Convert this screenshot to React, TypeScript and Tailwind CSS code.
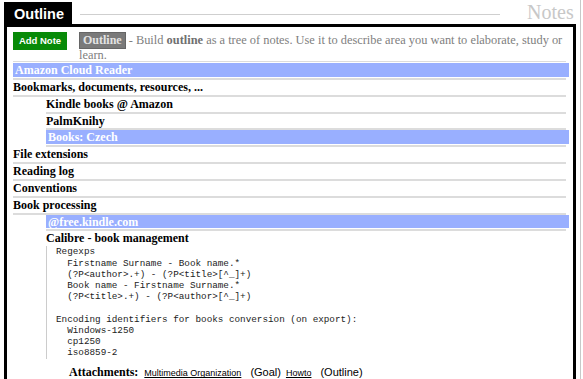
import React from 'react';

type Row = { label: string; level: 0 | 1; active?: boolean };

const ROWS: Row[] = [
  { label: 'Amazon Cloud Reader', level: 0, active: true },
  { label: 'Bookmarks, documents, resources, ...', level: 0 },
  { label: 'Kindle books @ Amazon', level: 1 },
  { label: 'PalmKnihy', level: 1 },
  { label: 'Books: Czech', level: 1, active: true },
  { label: 'File extensions', level: 0 },
  { label: 'Reading log', level: 0 },
  { label: 'Conventions', level: 0 },
  { label: 'Book processing', level: 0 },
  { label: '@free.kindle.com', level: 1, active: true },
];

const NOTE_TEXT = `Regexps
  Firstname Surname - Book name.*
  (?P<author>.+) - (?P<title>[^_]+)
  Book name - Firstname Surname.*
  (?P<title>.+) - (?P<author>[^_]+)

Encoding identifiers for books conversion (on export):
  Windows-1250
  cp1250
  iso8859-2`;

const serif = { fontFamily: '"Liberation Serif", serif' };
const sans = { fontFamily: '"Liberation Sans", Arial, sans-serif' };

function OutlineRow({ row }: { row: Row }) {
  return (
    <div className={`border-b-2 border-[#dcdcdc] mr-[3px] ${row.level === 1 ? 'ml-[33px]' : ''}`}>
      {row.active ? (
        <div className="-mr-[3px] mb-[1px] h-[13.85px] bg-[#99afff] text-white font-bold text-[12px] leading-[14px] pl-[2px] overflow-hidden">
          {row.label}
        </div>
      ) : (
        <div className="h-[14.85px] text-black font-bold text-[12px] leading-[15px] overflow-hidden">{row.label}</div>
      )}
    </div>
  );
}

export default function App() {
  return (
    <div className="w-[583px] h-[379px] bg-white overflow-hidden" style={serif}>
      <div className="w-[581px] h-full border-r border-[#c8c8c8]">
        {/* header */}
        <div className="flex h-[24px]">
          <div
            className="ml-[4px] mt-[2px] w-[68px] h-[22px] bg-black text-white font-bold text-[14.5px] leading-[22px] pl-[10px] pt-[1px]"
            style={sans}
          >
            Outline
          </div>
          <div className="ml-[8px] w-[420px] h-[1px] mt-[14px] bg-[#cfcfcf]" />
          <div className="ml-[27px] text-[20px] leading-[24px] text-[#c8c8c8]">Notes</div>
        </div>

        {/* box */}
        <div className="ml-[4px] w-[572px] h-[360px] border-[3px] border-b-0 border-black pl-[6px] pr-[4px] pt-[5px]">
          <div className="flex items-start h-[29px]">
            <button
              className="w-[54px] h-[18px] bg-[#088a08] text-white font-bold text-[9.5px] leading-[18px] shrink-0"
              style={sans}
            >
              Add Note
            </button>
            <div className="ml-[12px] text-[12.4px] leading-[12px] text-[#808080]">
              <span className="inline-block h-[17px] px-[3px] bg-[#7a7a7a] border border-[#666] text-[#e4e4e4] font-bold text-[12px] leading-[15px] mr-[3px] align-top">
                Outline
              </span>
              <span className="leading-[17px]">- Build <b className="text-[#707070]">outline</b> as a tree of notes. Use it to describe area you want to elaborate, study or</span>
              <br />
              <span>learn.</span>
            </div>
          </div>

          <div className="border-t border-[#dcdcdc] mr-[3px] mb-[1px]" />
          <div>
            {ROWS.map((r) => (
              <OutlineRow key={r.label} row={r} />
            ))}
          </div>

          {/* expanded note */}
          <div className="ml-[33px]">
            <div className="text-black font-bold text-[12px] leading-[15px]">Calibre - book management</div>
            <div className="border-l border-[#cccccc] pl-[9px] pb-[1px]">
              <pre
                className="text-[9.3px] leading-[11.2px] text-[#222]"
                style={{ fontFamily: '"Liberation Mono", "Courier New", monospace' }}
              >
                {NOTE_TEXT}
              </pre>
            </div>
            <div className="flex items-baseline mt-[6px] ml-[23px] leading-[14px]">
              <span className="font-bold text-[12px] mr-[6px]">Attachments:</span>
              <span className="text-[9px] underline text-black" style={sans}>Multimedia Organization</span>
              <span className="text-[11px] ml-[9px] text-black" style={sans}>(Goal)</span>
              <span className="text-[9px] underline ml-[5px] text-black" style={sans}>Howto</span>
              <span className="text-[11px] ml-[9px] text-black" style={sans}>(Outline)</span>
            </div>
          </div>
        </div>
      </div>
    </div>
  );
}
